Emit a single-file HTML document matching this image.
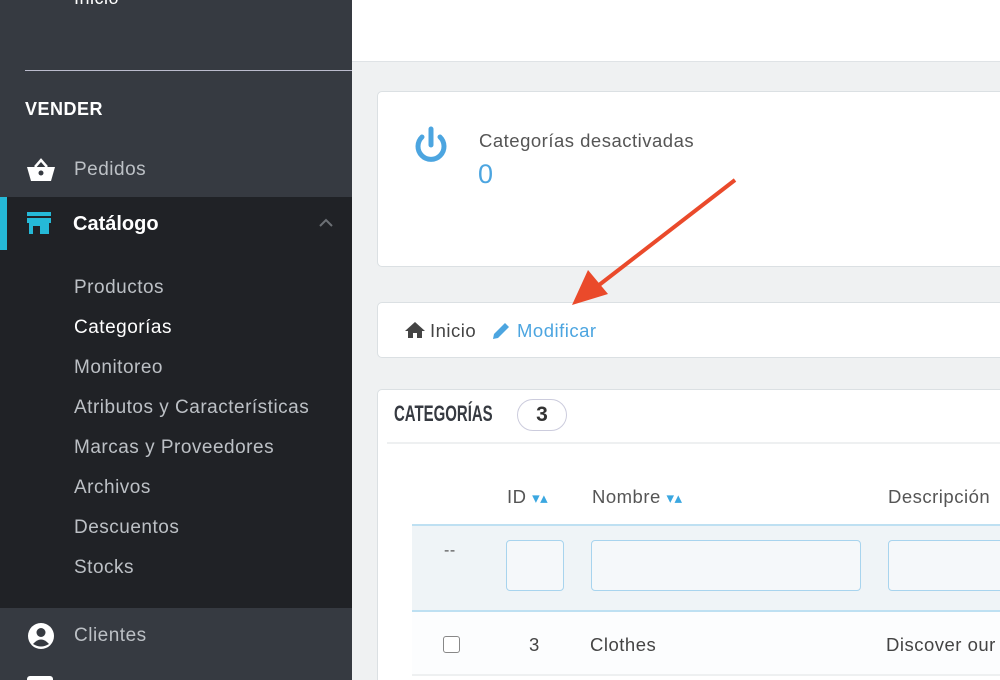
<!DOCTYPE html>
<html style="overflow:hidden"><head><meta charset="utf-8"><style>
*{margin:0;padding:0;box-sizing:border-box}
html,body{width:1000px;height:680px;overflow:hidden}
body{background:#eff1f2;font-family:"Liberation Sans",sans-serif;position:relative}
.sb{position:absolute;left:0;top:0;width:352px;height:680px;background:#363a41}
.t{position:absolute;white-space:nowrap;letter-spacing:.5px}
.hdr{position:absolute;left:352px;top:0;width:648px;height:62px;background:#fff;border-bottom:1px solid #dfe3e6}
.card{position:absolute;background:#fff;border:1px solid #dbe0e3;border-radius:5px}
.s{font-size:19px;color:#bcc0c5;left:74px}
</style></head><body>
<div class="sb">
 <div class="t" style="left:74px;top:-12px;color:#fff;font-size:18px">Inicio</div>
 <div style="position:absolute;left:25px;top:70px;width:327px;height:1px;background:#bbc"></div>
 <div class="t" style="left:25px;top:99px;color:#fff;font-size:18px;font-weight:bold">VENDER</div>
 <svg style="position:absolute;left:26px;top:157px" width="30" height="26" viewBox="0 0 30 26"><path d="M9 10 L15 3 L21 10" stroke="#fff" stroke-width="2.5" fill="none"/><path d="M1 10 H29 L25 24 H5 Z" fill="#fff"/><circle cx="15" cy="16" r="2.5" fill="#363a41"/></svg>
 <div class="t s" style="top:159px">Pedidos</div>
 <div style="position:absolute;left:0;top:197px;width:352px;height:411px;background:#202226"></div>
 <div style="position:absolute;left:0;top:197px;width:7px;height:53px;background:#25b9d7"></div>
 <svg style="position:absolute;left:26px;top:211px" width="26" height="24" viewBox="0 0 26 24"><rect x="1" y="1" width="24" height="4" fill="#25b9d7"/><rect x="1" y="7" width="24" height="5" fill="#25b9d7"/><rect x="3" y="12" width="20" height="11" fill="#25b9d7"/><rect x="7" y="15" width="7" height="8" fill="#202226"/></svg>
 <div class="t" style="left:73px;top:213px;color:#fff;font-size:20px;font-weight:bold;letter-spacing:0">Catálogo</div>
 <svg style="position:absolute;left:318px;top:218px" width="16" height="10"><path d="M2 8 L8 2 L14 8" stroke="#6c7075" stroke-width="2" fill="none"/></svg>
 <div class="t s" style="top:277px">Productos</div>
 <div class="t s" style="top:317px;color:#fff">Categorías</div>
 <div class="t s" style="top:357px">Monitoreo</div>
 <div class="t s" style="top:397px">Atributos y Características</div>
 <div class="t s" style="top:437px">Marcas y Proveedores</div>
 <div class="t s" style="top:477px">Archivos</div>
 <div class="t s" style="top:517px">Descuentos</div>
 <div class="t s" style="top:557px">Stocks</div>
 <svg style="position:absolute;left:27px;top:622px" width="28" height="28" viewBox="0 0 28 28"><circle cx="14" cy="14" r="13" fill="#fff"/><circle cx="14" cy="10.5" r="4.5" fill="#363a41"/><path d="M6 22 Q14 13 22 22 Q14 27 6 22Z" fill="#363a41"/></svg>
 <div class="t s" style="top:625px">Clientes</div>
 <div style="position:absolute;left:27px;top:676px;width:26px;height:8px;background:#fff;border-radius:3px"></div>
</div>
<div class="hdr"></div>
<div class="card" style="left:377px;top:91px;width:640px;height:176px"></div>
<svg style="position:absolute;left:411px;top:125px" width="40" height="42" viewBox="0 0 40 42"><path d="M11 12 A13 13 0 1 0 29 12" stroke="#4ca5e0" stroke-width="5" fill="none" stroke-linecap="round"/><line x1="20" y1="4" x2="20" y2="20" stroke="#4ca5e0" stroke-width="5" stroke-linecap="round"/></svg>
<div class="t" style="left:479px;top:130px;color:#555;font-size:18.5px">Categorías desactivadas</div>
<div class="t" style="left:478px;top:159px;color:#4ca5e0;font-size:27px">0</div>
<div class="card" style="left:377px;top:302px;width:640px;height:56px"></div>
<svg style="position:absolute;left:404px;top:321px" width="22" height="18" viewBox="0 0 22 18"><path d="M11 1 L1 10 H4 V17 H9 V12 H13 V17 H18 V10 H21 Z" fill="#444"/></svg>
<div class="t" style="left:430px;top:320px;color:#444;font-size:18.5px">Inicio</div>
<svg style="position:absolute;left:490px;top:320px" width="22" height="22" viewBox="0 0 22 22"><path d="M3 19 L4 14 L15 3 L19 7 L8 18 Z" fill="#4ca5e0"/></svg>
<div class="t" style="left:517px;top:320px;color:#4ca5e0;font-size:18.5px">Modificar</div>
<svg style="position:absolute;left:560px;top:170px" width="190" height="150"><line x1="175" y1="10" x2="30" y2="122" stroke="#ea4a2b" stroke-width="4"/><path d="M12 135 L28 100 L48 124 Z" fill="#ea4a2b"/></svg>
<div class="card" style="left:377px;top:389px;width:640px;height:310px"></div>
<div class="t" style="left:394px;top:401px;color:#363a41;font-size:22px;font-weight:bold;letter-spacing:0;transform:scaleX(.68);transform-origin:left">CATEGORÍAS</div>
<div style="position:absolute;left:517px;top:399px;width:50px;height:32px;border:1px solid #ccd;border-radius:16px;text-align:center;font-size:21px;font-weight:bold;line-height:30px;color:#333">3</div>
<div style="position:absolute;left:387px;top:442px;width:620px;height:2px;background:#eef0f1"></div>
<div class="t" style="left:507px;top:486px;color:#555;font-size:18.5px">ID <span style="color:#3ba7e0;font-size:15px">▾▴</span></div>
<div class="t" style="left:592px;top:486px;color:#555;font-size:18.5px">Nombre <span style="color:#3ba7e0;font-size:15px">▾▴</span></div>
<div class="t" style="left:888px;top:486px;color:#555;font-size:18.5px">Descripción</div>
<div style="position:absolute;left:412px;top:524px;width:600px;height:88px;background:#eff4f7;border-top:2px solid #bee0f2;border-bottom:2px solid #bee0f2"></div>
<div class="t" style="left:444px;top:542px;color:#555;font-size:16px">--</div>
<div style="position:absolute;left:506px;top:540px;width:58px;height:51px;border:1px solid #a8d4ee;border-radius:4px;background:#f5f8fa"></div>
<div style="position:absolute;left:591px;top:540px;width:270px;height:51px;border:1px solid #a8d4ee;border-radius:4px;background:#f5f8fa"></div>
<div style="position:absolute;left:888px;top:540px;width:130px;height:51px;border:1px solid #a8d4ee;border-radius:4px;background:#f5f8fa"></div>
<div style="position:absolute;left:412px;top:612px;width:600px;height:64px;background:#fcfdfe;border-bottom:2px solid #eef0f1"></div>
<div style="position:absolute;left:443px;top:636px;width:17px;height:17px;border:1px solid #888;border-radius:3px;background:#fff"></div>
<div class="t" style="left:529px;top:634px;color:#444;font-size:18.5px">3</div>
<div class="t" style="left:590px;top:634px;color:#444;font-size:18.5px">Clothes</div>
<div class="t" style="left:886px;top:634px;color:#444;font-size:18.5px">Discover our</div>
</body></html>
